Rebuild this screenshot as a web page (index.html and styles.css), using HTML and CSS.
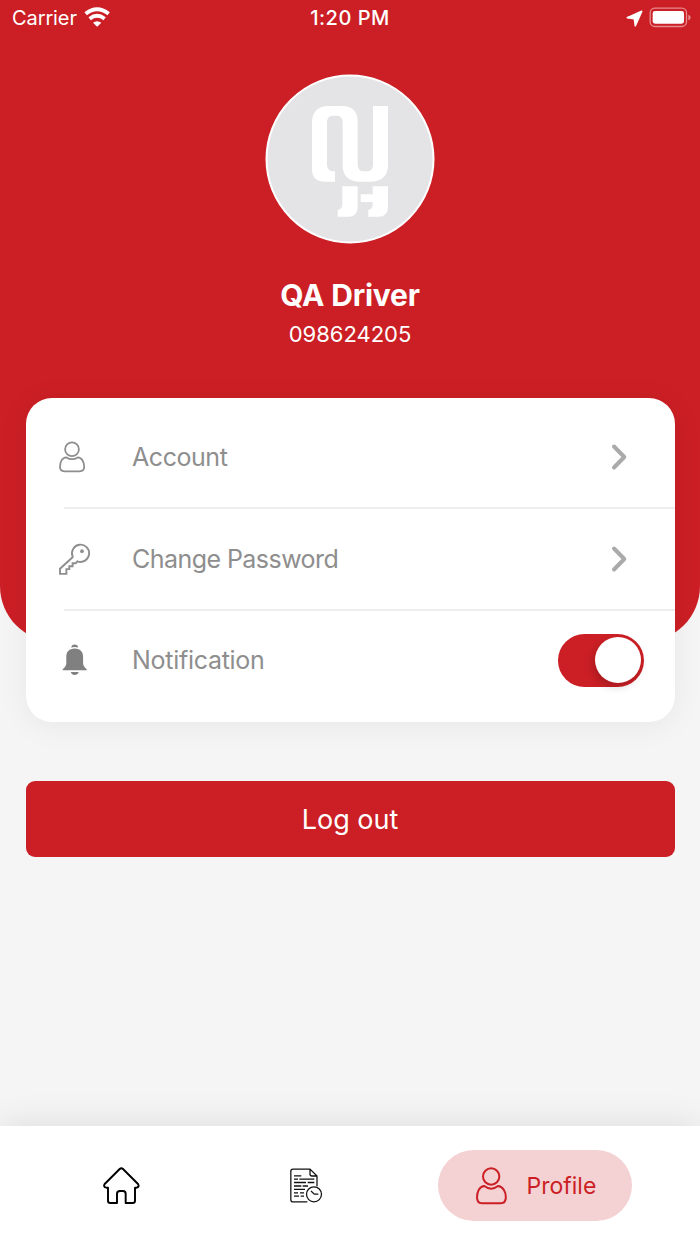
FILE: index.html
```html
<!DOCTYPE html>
<html lang="en">
<head>
<meta charset="utf-8">
<title>Profile</title>
<link rel="stylesheet" href="styles.css">
</head>
<body>
<div class="app">
  <header class="hero">
    <div class="status">
      <div class="status-left">
        <span class="carrier">Carrier</span>
        <svg class="wifi" viewBox="252 20 81 60"><g fill="none" stroke="#fff" stroke-width="11.500"><path d="M257 40Q291 13 326 40"/><path d="M269 55Q291 38 314 55"/></g><path d="M279 67Q291 58 304 67L291.500 79Z" fill="#fff"/></svg>
      </div>
      <span class="time">1:20 PM</span>
      <div class="status-right">
        <svg class="locate" viewBox="1008 27 51 51"><path d="M1055 31L1036 74L1033 53L1012 50Z" fill="#fff" stroke="#fff" stroke-width="5" stroke-linejoin="round"/></svg>
        <svg class="battery" viewBox="1077 20 129 63"><rect x="1080.500" y="23.500" width="109" height="55" rx="14" fill="none" stroke="#e58a8e" stroke-width="4"/><rect x="1088" y="32" width="94" height="38" rx="7" fill="#fff"/><path d="M1195 43Q1202 45 1202 51.500T1195 60Z" fill="#e58a8e"/></svg>
      </div>
    </div>
    <svg class="avatar" viewBox="30 27 510 510">
      <circle cx="285" cy="282" r="250.500" fill="#e4e4e6" stroke="#fff" stroke-width="6"/>
      <path fill="#fff" d="M240 350H210Q171 350 171 312V174Q171 123 222 123H260Q308 123 308 170V300Q310 319 325 319H337Q352 319 354 300V123H399V300Q399 350 345 350H315Q263 350 263 300V170Q261 152 247 152H232Q218 152 216 170V300Q218 317 232 319H240Z"/>
      <path fill="#fff" d="M262 364H308V425Q308 455 280 455H248V435Q262 432 262 420ZM353 364H399V425Q399 455 370 455H340V435Q353 432 353 420V411H317V388H353Z"/>
    </svg>
    <h1 class="name">QA Driver</h1>
    <p class="phone">098624205</p>
  </header>

  <main class="content">
    <section class="card">
      <div class="row">
        <svg class="row-icon" viewBox="0 0 34 34"><g fill="none" stroke="#8e8e8e" stroke-width="1.800"><circle cx="15" cy="9.200" r="6.900"/><path d="M9.400 17.400C5 17.700 3 22.200 3 27.100Q3 31.300 7.300 31.300H22.700Q27.200 31.300 27.200 27.100C27.200 22.200 25 17.700 20.800 17.400Q15 21 9.400 17.400Z"/></g></svg>
        <span class="label account">Account</span>
        <svg class="chevron" viewBox="0 0 18 28"><path d="M4 3.500L14.300 14L4 24.500"/></svg>
      </div>
      <div class="row divided">
        <svg class="row-icon" viewBox="0 0 34 34"><path d="M15.700 14.700A8.600 8.600 0 1 1 20.500 19.300L18.700 21.200H15.600V24.200H12.300V27.100H9.400V31.900H3V26.700L15.600 15.300Z" fill="none" stroke="#8e8e8e" stroke-width="1.900"/><circle cx="25" cy="9.200" r="1.900" fill="#8e8e8e"/></svg>
        <span class="label password">Change Password</span>
        <svg class="chevron" viewBox="0 0 18 28"><path d="M4 3.500L14.300 14L4 24.500"/></svg>
      </div>
      <div class="row divided">
        <svg class="row-icon" viewBox="0 0 34 34"><path fill="#808080" d="M14.200 4.500Q14.600 1.500 17.700 1.500T21.200 4.500Q17.700 3.500 14.200 4.500ZM17.700 5.500C12 5.500 9.300 9 9.300 14V20Q9.300 23.500 5.700 26.200V27.300H29.700V26.200Q26.100 23.500 26.100 20V14C26.100 9 23.400 5.500 17.700 5.500ZM13.700 29.100H21.700Q20.700 32 17.700 32T13.700 29.100Z"/></svg>
        <span class="label notification">Notification</span>
        <span class="switch"><span class="knob"></span></span>
      </div>
    </section>
    <button class="logout">Log out</button>
  </main>

  <nav class="tabs">
    <svg class="home" viewBox="69 171 111 111"><path d="M119 177Q124 172 129 177L174 222Q179 231 170 233H165V272Q165 279 158 279H137V251Q137 243 129 243H120Q111 243 111 251V279H91Q84 279 84 272V233H79Q69 231 74 222Z" fill="none" stroke="#000" stroke-width="5.800" stroke-linejoin="round"/></svg>
    <svg class="history" viewBox="30 25 99 105"><g fill="none" stroke="#111" stroke-width="3.800"><path d="M82 126.500H39Q32.500 126.500 32.500 120V35Q32.500 28.500 39 28.500H90L111 49V80M90 28.500V43Q90 49 96 49H111"/><path d="M42 48.500H64M42 58.500H54M58 58.500H103M42 68.500H78M83 68.500H103M42 79H64M68 79H84M42 89H75M42 99.500H54M60 99.500H72M42 109.500H57M62 109.500H72"/><circle cx="102" cy="104" r="22.500" fill="#fff"/><path d="M93 94L103 103.500H115"/></g></svg>
    <div class="tab-active">
      <svg class="profile" viewBox="135 170 99 114"><g fill="none" stroke="#cb1f25" stroke-width="6"><circle cx="183.500" cy="198.500" r="24.500"/><path d="M163 227C148 228 141 245 141 261Q141 279 156 279H212Q227.500 279 227.500 261C227.500 245 219 228 204 227Q183.500 243 163 227Z"/></g></svg>
      <span class="tab-label">Profile</span>
    </div>
  </nav>
</div>
</body>
</html>
```

FILE: styles.css
```css
* { box-sizing: border-box; }
body { margin: 0; font-family: Inter, "Liberation Sans", sans-serif; background: #f5f5f5; }
svg { display: block; flex: none; }
.app { width: 700px; height: 1244px; display: flex; flex-direction: column; overflow: hidden; background: #f5f5f5; }
.hero { height: 642px; flex: none; background: #cb1f25; border-radius: 0 0 56px 56px; color: #fff; display: flex; flex-direction: column; align-items: center; }
.status { width: 100%; height: 36px; padding: 0 8px 0 12px; display: grid; grid-template-columns: 1fr auto 1fr; align-items: center; font-size: 20px; line-height: 36px; }
.status-left, .status-right { display: flex; align-items: center; }
.status-left { gap: 7px; }
.carrier { letter-spacing: -.1px; }
.wifi { width: 27px; height: 20px; margin-top: -3px; }
.time { font-weight: 500; letter-spacing: .5px; margin-right: 4px; }
.status-right { justify-content: flex-end; gap: 6px; }
.locate { width: 17px; height: 17px; }
.battery { width: 43px; height: 21px; margin-top: -2px; }
.avatar { width: 170px; height: 170px; margin-top: 38px; }
.name { margin: 31px 0 0; font-size: 30px; line-height: 40px; font-weight: 700; letter-spacing: -.2px; }
.phone { margin: 0; font-size: 22px; line-height: 38px; letter-spacing: 0; }
.content { flex: 1; padding: 0 25.5px; display: flex; flex-direction: column; }
.card { margin-top: -244px; height: 324px; padding-top: 8px; border-radius: 26px; background: #fff; box-shadow: 0 4px 32px rgba(0, 0, 0, .06); }
.row { height: 101.3px; margin-left: 38.5px; padding-right: 30.5px; display: flex; align-items: center; }
.divided { border-top: 2px solid #eee; }
.row-icon { width: 34px; height: 34px; margin-left: -7px; }
.label { flex: 1; margin-left: 41px; font-size: 25px; color: #8e8e8e; }
.account { letter-spacing: -.45px; }
.password { letter-spacing: -.55px; }
.notification { letter-spacing: -.28px; }
.chevron { width: 18px; height: 28px; margin-right: 16px; }
.chevron path { fill: none; stroke: #aaa; stroke-width: 4; stroke-linecap: round; stroke-linejoin: round; }
.switch { width: 86px; height: 53px; padding: 3px; border-radius: 27px; background: #cb1f25; display: flex; align-items: center; justify-content: flex-end; }
.knob { width: 46px; height: 46px; border-radius: 50%; background: #fff; box-shadow: -2px 4px 8px rgba(0, 0, 0, .18); }
.logout { margin: 59px 0 0; height: 76px; flex: none; padding: 1px 0 0; border: 0; border-radius: 9px; background: #cb1f25; color: #fff; font-family: inherit; font-size: 27px; }
.tabs { height: 118.500px; padding-top: 2px; flex: none; background: #fff; box-shadow: 0 0 34px rgba(0, 0, 0, .11); display: grid; grid-template-columns: 243px 126px 1fr; align-items: center; justify-items: center; }
.home { width: 37px; height: 37px; }
.history { width: 33px; height: 35px; }
.tab-active { width: 194px; height: 71px; border-radius: 36px; background: #f4d2d3; color: #cb1f25; display: flex; align-items: center; padding-left: 37px; gap: 19px; }
.profile { width: 33px; height: 38px; }
.tab-label { font-size: 23px; }
```
